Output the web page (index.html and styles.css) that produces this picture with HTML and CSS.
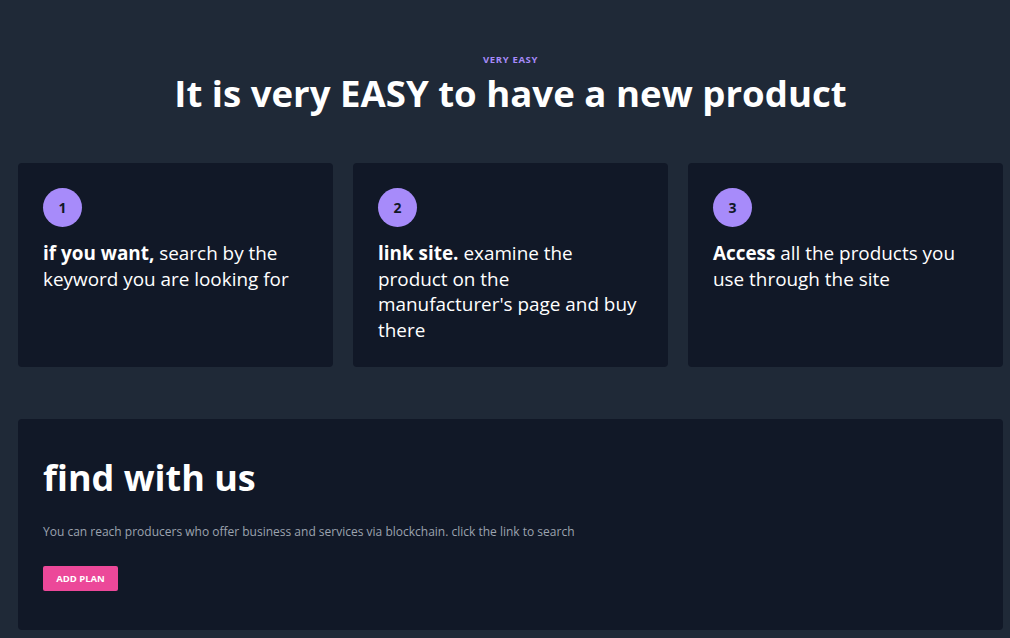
FILE: index.html
```html
<!DOCTYPE html>
<html lang="en">
<head>
<meta charset="utf-8">
<title>Very easy</title>
<link rel="stylesheet" href="styles.css">
</head>
<body>
<main class="page">
  <header class="intro">
    <p class="eyebrow">VERY EASY</p>
    <h1 class="title">It is very EASY to have a new product</h1>
  </header>
  <section class="steps">
    <article class="step">
      <div class="badge">1</div>
      <p class="step-text"><strong>if you want,</strong> search by the keyword you are looking for</p>
    </article>
    <article class="step">
      <div class="badge">2</div>
      <p class="step-text"><strong>link site.</strong> examine the product on the manufacturer's page and buy there</p>
    </article>
    <article class="step">
      <div class="badge">3</div>
      <p class="step-text"><strong>Access</strong> all the products you use through the site</p>
    </article>
  </section>
  <section class="cta">
    <h2 class="cta-title">find with us</h2>
    <p class="cta-text">You can reach producers who offer business and services via blockchain. click the link to search</p>
    <button class="cta-btn" type="button">ADD PLAN</button>
  </section>
</main>
</body>
</html>
```
FILE: styles.css
```css
* { box-sizing: border-box; }
html, body { margin: 0; padding: 0; }
body {
  background: #1f2937;
  color: #ffffff;
  font-family: "Open Sans", "Noto Sans", sans-serif;
  width: 1010px;
  height: 638px;
  overflow: hidden;
}
.page {
  padding: 54px 7px 0 18px;
}
.intro {
  text-align: center;
}
.eyebrow {
  margin: 0;
  font-size: 9.5px;
  font-weight: 700;
  letter-spacing: 0.07em;
  color: #a78bfa;
  line-height: 12px;
}
.title {
  margin: 3px 0 0;
  font-size: 36.6px;
  font-weight: 700;
  line-height: 48px;
}
.steps {
  display: grid;
  grid-template-columns: repeat(3, 315px);
  gap: 20px;
  margin-top: 46px;
}
.step {
  background: #111827;
  border-radius: 4px;
  height: 204px;
  padding: 25px;
}
.badge {
  width: 39px;
  height: 39px;
  border-radius: 50%;
  background: #a78bfa;
  color: #111827;
  font-size: 14px;
  font-weight: 700;
  display: flex;
  align-items: center;
  justify-content: center;
}
.step-text {
  margin: 14px 0 0;
  font-size: 18.9px;
  line-height: 25.6px;
  font-weight: 500;
}
.step-text strong { font-weight: 700; }
.cta {
  margin-top: 52px;
  background: #111827;
  border-radius: 4px;
  height: 211px;
  padding: 34px 25px;
}
.cta-title {
  margin: 0;
  font-size: 36px;
  line-height: 50px;
  font-weight: 700;
}
.cta-text {
  margin: 19px 0 0;
  font-size: 12px;
  line-height: 20px;
  color: #9ca3af;
}
.cta-btn {
  display: block;
  margin-top: 24px;
  background: #ec4899;
  color: #ffffff;
  border: none;
  border-radius: 2px;
  width: 75px;
  height: 25px;
  font-family: inherit;
  font-size: 9.5px;
  font-weight: 700;
  padding: 0;
}
```
